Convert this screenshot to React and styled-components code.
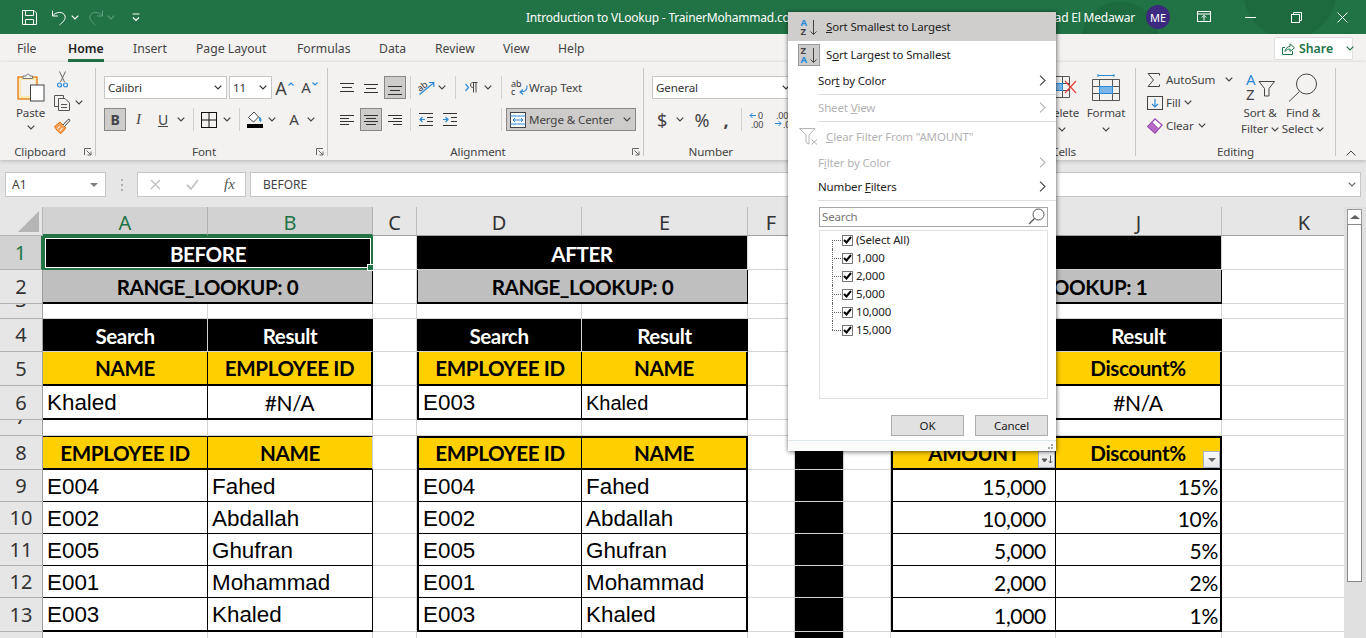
import React from 'react';
import styled, {createGlobalStyle} from 'styled-components';

const uiFont = `"Noto Sans", "Open Sans", sans-serif`;
const calibri = `Lato, "Noto Sans", sans-serif`;
const arial = `"Liberation Sans", Arial, sans-serif`;
const green = '#217346';
const inkGray = '#444444';
const blue = '#2b8ad8';

const GlobalStyle = createGlobalStyle`
  html, body {
    margin: 0;
    padding: 0;
    background: #e6e6e6;
    overflow: hidden;
  }
`;

/* ---------- icons ---------- */
const Svg = ({w, h, children, stroke = inkGray, fill = 'none'}) => (
    <svg width={w} height={h} viewBox={`0 0 ${w} ${h}`} fill={fill} stroke={stroke} strokeWidth="1" style={{display: 'block', flexShrink: 0}}>
        {children}
    </svg>
);

const Chevron = ({color = inkGray, w = 8}) => (
    <Svg w={w} h={5} stroke={color}><path d="M0.7 0.7L4 4L7.3 0.7" strokeWidth="1.2" /></Svg>
);

const SaveIcon = () => (
    <Svg w={17} h={17} stroke="#fff">
        <path d="M1.5 1.5H13L15.5 4V15.5H1.5Z" />
        <path d="M4.5 1.5V6.5H12.5V1.5M4.5 15.5V10.5H12.5V15.5" />
    </Svg>
);
const UndoIcon = ({color}) => (
    <Svg w={16} h={17} stroke={color}>
        <path d="M1.5 1.5V7H7" />
        <path d="M1.5 7C4.5 2.5 12.5 2 14 7C15 10.5 11.5 13.5 8.5 16" />
    </Svg>
);
const RedoIcon = ({color}) => (
    <Svg w={16} h={17} stroke={color}>
        <path d="M14.5 1.5V7H9" />
        <path d="M14.5 7C11.5 2.5 3.5 2 2 7C1 10.5 4.5 13.5 7.5 16" />
    </Svg>
);
const CustomizeIcon = () => (
    <Svg w={8} h={9} stroke="#fff">
        <path d="M0.5 1H7.5" />
        <path d="M1 4.5L4 7.5L7 4.5" strokeWidth="1.2" />
    </Svg>
);
const PresentIcon = () => (
    <Svg w={14} h={12} stroke="#fff">
        <rect x="0.5" y="0.5" width="13" height="10" />
        <path d="M0.5 3H13.5M7 9.5V4.5M4.8 6.5L7 4.3L9.2 6.5" />
    </Svg>
);
const MinIcon = () => <Svg w={11} h={3} stroke="#fff"><path d="M0 1.5H11" /></Svg>;
const RestoreIcon = () => (
    <Svg w={11} h={11} stroke="#fff">
        <rect x="0.5" y="2.5" width="8" height="8" />
        <path d="M2.5 2.5V0.5H10.5V8.5H8.5" />
    </Svg>
);
const CloseIcon = () => <Svg w={11} h={11} stroke="#fff"><path d="M0.5 0.5L10.5 10.5M10.5 0.5L0.5 10.5" /></Svg>;

const ShareIcon = () => (
    <Svg w={13} h={13} stroke={green}>
        <path d="M3 5.5H0.5V12.5H10.5V9" />
        <path d="M3 9.5C3.5 6 6 4.5 8 4.5V1.8L12.5 5.8L8 9.5V7C6 7 4.5 7.5 3 9.5Z" />
    </Svg>
);

const PasteIcon = () => (
    <Svg w={28} h={30}>
        <rect x="1" y="5" width="19" height="22" fill="#fbe9b0" stroke="#e07b1a" strokeWidth="1.3" />
        <rect x="4" y="8" width="14" height="16" fill="#f3f2f1" stroke="none" />
        <path d="M6 6.5V4H9C9 1.5 13 1.5 13 4H15.5V6.5Z" fill="#f3f2f1" stroke="#777" />
        <rect x="13.5" y="13" width="13.5" height="16" fill="#fff" stroke="#444" />
    </Svg>
);
const CutIcon = () => (
    <Svg w={11} h={17} stroke="#666">
        <path d="M2.5 0.5L7.5 11M8.5 0.5L3.5 11" />
        <circle cx="2.5" cy="14" r="2" stroke={blue} strokeWidth="1.2" />
        <circle cx="8.5" cy="14" r="2" stroke={blue} strokeWidth="1.2" />
    </Svg>
);
const CopyIcon = () => (
    <Svg w={16} h={16} stroke="#555">
        <path d="M9.5 3.5V0.5H0.5V11.5H4" />
        <path d="M4.5 3.5H11L15.5 8V15.5H4.5Z" fill="#f3f2f1" />
        <path d="M7 9.5H13M7 12.5H13" />
    </Svg>
);
const PainterIcon = () => (
    <Svg w={17} h={16}>
        <path d="M0.5 8.5L6 4L12 10L7 15.5C5 15 1.5 11 0.5 8.5Z" fill="#f4a259" stroke="#e0721a" />
        <path d="M3.5 10.5L6 8.5M6 13L8.5 10" stroke="#fff" />
        <path d="M9 7L14 1.5C15 0.5 16.5 2 15.5 3L10.5 8.5" fill="#f3f2f1" stroke="#444" />
    </Svg>
);
const Launcher = () => (
    <Svg w={8} h={8} stroke="#666">
        <path d="M0.5 7V0.5H7" />
        <path d="M2.5 2.5L7 7M7 3.5V7H3.5" />
    </Svg>
);
const Caret = ({up}) => (
    <Svg w={6} h={4} stroke={blue}><path d={up ? 'M0.5 3.5L3 1L5.5 3.5' : 'M0.5 0.5L3 3L5.5 0.5'} strokeWidth="1.2" /></Svg>
);
const BorderIcon = () => (
    <Svg w={16} h={16} stroke="#111">
        <rect x="0.5" y="0.5" width="15" height="15" />
        <path d="M8 0.5V15.5M0.5 8H15.5" />
    </Svg>
);
const FillIcon = () => (
    <Svg w={16} h={17}>
        <path d="M1.5 6.5L7 1L11.5 6L6.5 11Z" fill="#fff" stroke="#444" />
        <path d="M12.5 6C14 7.5 14.5 9.5 13.5 10.5C12.5 10 12.2 8 12.5 6Z" fill={blue} stroke={blue} />
        <rect x="0" y="13" width="16" height="4" fill="#000" stroke="none" />
    </Svg>
);
const Lines = ({rows}) => (
    <Svg w={14} h={14} stroke="#333">
        {rows.map(([a, b, y]) => <path key={y} d={`M${a} ${y}.5H${b}`} />)}
    </Svg>
);
const OrientIcon = () => (
    <Svg w={18} h={16} stroke={blue}>
        <path d="M1.5 14.5L15.5 3M11 2.5H15.8V7" strokeWidth="1.2" />
        <text x="0" y="10" fontSize="9" fontFamily={uiFont} fill="#333" stroke="none" transform="rotate(-38 4 8)">ab</text>
    </Svg>
);
const IndentIcon = ({reverse}) => (
    <Svg w={14} h={13} stroke="#333">
        <path d="M0 0.5H14M0 12.5H14M8 4.5H14M8 8.5H14" />
        <path d={reverse ? 'M6 6.5H1M3.5 4L1 6.5L3.5 9' : 'M0 6.5H5M2.5 4L5 6.5L2.5 9'} stroke={blue} strokeWidth="1.2" />
    </Svg>
);
const RtlIcon = () => (
    <Svg w={13} h={11} stroke={blue}>
        <path d="M0.5 2L3.5 5.5L0.5 9" strokeWidth="1.2" />
        <path d="M8.5 1V10.5M11 1V10.5M12.5 0.5H7.5C5 0.5 5 5.5 7.5 5.5H8.5" stroke="#444" />
    </Svg>
);
const WrapIcon = () => (
    <Svg w={17} h={17} stroke={blue}>
        <text x="0" y="7.5" fontSize="9" fontFamily={uiFont} fill="#333" stroke="none">ab</text>
        <text x="0" y="16" fontSize="9" fontFamily={uiFont} fill="#333" stroke="none">c</text>
        <path d="M16 6.5C16.5 11 14 13 10 13M12 10.5L9 13L12 15.5" strokeWidth="1.1" />
    </Svg>
);
const MergeIcon = () => (
    <Svg w={16} h={16} stroke="#444">
        <rect x="0.5" y="0.5" width="15" height="15" fill="#fff" />
        <path d="M0.5 4H15.5M0.5 12H15.5" stroke={blue} />
        <path d="M3 8H13M5 6L3 8L5 10M11 6L13 8L11 10" stroke={blue} />
    </Svg>
);
const DecMore = () => (
    <Svg w={16} h={17} stroke={blue}>
        <path d="M1 4.5H7M3.5 2L1 4.5L3.5 7" />
        <text x="9" y="8" fontSize="9" fontFamily={uiFont} fill="#444" stroke="none">0</text>
        <text x="2" y="16.5" fontSize="9" fontFamily={uiFont} fill="#444" stroke="none">.00</text>
    </Svg>
);
const DecLess = () => (
    <Svg w={16} h={17} stroke={blue}>
        <text x="2" y="8" fontSize="9" fontFamily={uiFont} fill="#444" stroke="none">.00</text>
        <path d="M1 12.5H7M4.5 10L7 12.5L4.5 15" />
        <text x="9" y="16.5" fontSize="9" fontFamily={uiFont} fill="#444" stroke="none">.0</text>
    </Svg>
);
const DeleteIcon = () => (
    <Svg w={30} h={22} stroke="#555">
        <path d="M0.5 0.5H22.5V21.5H0.5ZM0.5 7.5H22.5M0.5 14.5H22.5M8 0.5V21.5M15.5 0.5V21.5" />
        <rect x="0.5" y="7.5" width="15" height="7" fill="#7ab4e8" stroke={blue} />
        <path d="M18 5L29 17M29 5L18 17" stroke="#e8443a" strokeWidth="1.2" />
    </Svg>
);
const FormatIcon = () => (
    <Svg w={28} h={27} stroke="#555">
        <path d="M6 1.5H22M6 0V3M22 0V3" stroke={blue} />
        <path d="M0.5 5.5H27.5V26.5H0.5ZM0.5 12.5H27.5M0.5 19.5H27.5M7.5 5.5V26.5M20.5 5.5V26.5" />
        <rect x="7.5" y="12.5" width="13" height="7" fill="#7ab4e8" stroke={blue} />
    </Svg>
);
const SigmaIcon = () => <Svg w={13} h={14} stroke="#444"><path d="M12.5 2.5V0.5H1L6.5 7L1 13.5H12.5V11.5" /></Svg>;
const FillDownIcon = () => (
    <Svg w={16} h={14} stroke="#444">
        <rect x="0.5" y="0.5" width="15" height="13" />
        <path d="M8 3V10.5M5 8L8 11L11 8" stroke={blue} strokeWidth="1.2" />
    </Svg>
);
const EraserIcon = () => (
    <Svg w={16} h={16} stroke="#9b4fb0">
        <path d="M0.8 8.5L8 1L15 7L8 15Z" fill="#fff" strokeWidth="1.3" />
        <path d="M0.8 8.5L5 4.3L11.5 10.8L8 15Z" fill="#b66bc9" />
    </Svg>
);
const SortFilterIcon = () => (
    <Svg w={30} h={28} stroke="#444">
        <text x="1" y="12" fontSize="15" fontFamily={uiFont} fill={blue} stroke="none">A</text>
        <text x="1" y="27" fontSize="15" fontFamily={uiFont} fill="#444" stroke="none">Z</text>
        <path d="M14 8.5H29.5L24 15.5V23H19.5V15.5Z" />
    </Svg>
);
const FindIcon = () => (
    <Svg w={31} h={30} stroke="#444">
        <circle cx="18.5" cy="12" r="10" />
        <path d="M11.5 19.5L1 29.5" />
    </Svg>
);
const FunnelX = () => (
    <Svg w={19} h={17} stroke="#b5b5b5">
        <path d="M0.5 0.5H16L10 7V16L7 14.5V7Z" />
        <path d="M12.5 11.5L18 16.5M18 11.5L12.5 16.5" />
    </Svg>
);
const SortMenuIcon = ({first, second, boxed}) => (
    <SortBox $boxed={boxed}>
        <svg width="20" height="20" viewBox="0 0 20 20" fill="none" stroke="#444" style={{display: 'block'}}>
            <text x="1.5" y="8.5" fontSize="9.5" fontWeight="700" fontFamily={uiFont} fill={first === 'A' ? blue : '#444'} stroke="none">{first}</text>
            <text x="1.5" y="18" fontSize="9.5" fontWeight="700" fontFamily={uiFont} fill={second === 'A' ? blue : '#444'} stroke="none">{second}</text>
            <path d="M14.5 3V17.5M11.5 14.5L14.5 17.5L17.5 14.5" />
        </svg>
    </SortBox>
);
const MenuArrow = ({color}) => <Svg w={7} h={11} stroke={color}><path d="M1 0.7L6 5.5L1 10.3" strokeWidth="1.1" /></Svg>;
const SearchGlass = () => (
    <Svg w={17} h={17} stroke="#555">
        <circle cx="10.5" cy="6.5" r="5.5" />
        <path d="M6.5 10.5L1 16" strokeWidth="1.2" />
    </Svg>
);
const Tick = () => (
    <svg width="9" height="8" viewBox="0 0 9 8" fill="none" stroke="#000" strokeWidth="2" style={{display: 'block'}}>
        <path d="M1 4L3.5 6.5L8 1" />
    </svg>
);

/* ---------- title bar and tabs ---------- */
const Page = styled.div`
  position: relative;
  width: 1366px;
  height: 638px;
  overflow: hidden;
  background: #e6e6e6;
  font-family: ${uiFont};
  display: flex;
  flex-direction: column;
`;

const TitleBar = styled.div`
  height: 34px;
  flex-shrink: 0;
  background:
    radial-gradient(circle at 1120px 40px, #1c6a3e 0, #1c6a3e 38px, transparent 39px),
    radial-gradient(circle at 1290px -8px, #1c6a3e 0, #1c6a3e 46px, transparent 47px),
    ${green};
  color: #fff;
  display: flex;
  align-items: center;
  font-size: 12px;
  white-space: nowrap;
`;

const QuickBar = styled.div`
  width: 526px;
  flex-shrink: 0;
  display: flex;
  align-items: center;
`;

const QuickItem = styled.div`
  display: flex;
  align-items: center;
  justify-content: center;
  width: ${p => p.$w}px;
  margin-left: ${p => p.$ml || 0}px;
`;

const DocTitle = styled.div`
  width: 309px;
  flex-shrink: 0;
  letter-spacing: -0.2px;
`;

const UserName = styled.div`
  width: 300px;
  flex-shrink: 0;
  text-align: right;
  letter-spacing: -0.2px;
`;

const Avatar = styled.div`
  width: 24px;
  height: 24px;
  margin-left: 11px;
  border-radius: 50%;
  background: #3b2a7e;
  color: #fff;
  font-size: 11px;
  display: flex;
  align-items: center;
  justify-content: center;
`;

const WinBtn = styled.div`
  width: ${p => p.$w || 46}px;
  margin-left: ${p => p.$ml || 0}px;
  display: flex;
  align-items: center;
  justify-content: center;
`;

const TabRow = styled.div`
  height: 28px;
  flex-shrink: 0;
  background: #f3f2f1;
  display: flex;
  align-items: center;
  padding-left: 17px;
  position: relative;
`;

const TabSlot = styled.div`
  width: ${p => p.$w}px;
  flex-shrink: 0;
  display: flex;
`;

const TabLabel = styled.div`
  font-size: 12.2px;
  line-height: 29px;
  height: 28px;
  box-sizing: border-box;
  color: ${p => p.$active ? '#222' : inkGray};
  font-weight: ${p => p.$active ? 600 : 400};
  border-bottom: 3px solid ${p => p.$active ? green : 'transparent'};
`;

const ShareButton = styled.div`
  margin-left: auto;
  margin-right: 13px;
  width: 79px;
  height: 23px;
  box-sizing: border-box;
  background: #fff;
  border: 1px solid #e1dfdd;
  border-radius: 2px;
  color: ${green};
  font-size: 12.3px;
  font-weight: 600;
  display: flex;
  align-items: center;
  padding-left: 7px;
  gap: 4px;
`;

/* ---------- ribbon ---------- */
const Ribbon = styled.div`
  height: 98px;
  flex-shrink: 0;
  background: #f3f2f1;
  box-shadow: 0 1px 4px rgba(0, 0, 0, 0.22);
  display: flex;
  color: ${inkGray};
  font-size: 11.6px;
  letter-spacing: -0.12px;
  white-space: nowrap;
  position: relative;
  z-index: 1;
`;

const Group = styled.div`
  width: ${p => p.$w ? `${p.$w}px` : 'auto'};
  flex: ${p => p.$w ? '0 0 auto' : 1};
  display: flex;
  flex-direction: column;
  box-sizing: border-box;
  padding-top: 6px;
  padding-bottom: 4px;
`;

const GroupInner = styled.div`
  flex: 1;
  display: flex;
  flex-direction: column;
  border-right: ${p => p.$noLine ? 'none' : '1px solid #c8c6c4'};
`;

const GroupBody = styled.div`
  flex: 1;
  display: flex;
  padding-left: ${p => p.$pl || 0}px;
  padding-top: ${p => p.$pt ?? 8}px;
  justify-content: ${p => p.$end ? 'flex-end' : 'flex-start'};
  padding-right: ${p => p.$pr || 0}px;
`;

const Stack = styled.div`
  display: flex;
  flex-direction: column;
  gap: ${p => p.$gap ?? 9}px;
  width: ${p => p.$w ? `${p.$w}px` : 'auto'};
`;

const ToolRow = styled.div`
  display: flex;
  align-items: center;
  height: 23px;
`;

const Tool = styled.div`
  width: ${p => p.$w}px;
  margin-left: ${p => p.$ml || 0}px;
  height: 23px;
  flex-shrink: 0;
  box-sizing: border-box;
  display: flex;
  align-items: center;
  justify-content: ${p => p.$start ? 'flex-start' : 'center'};
  gap: ${p => p.$gap || 0}px;
  padding-left: ${p => p.$pl || 0}px;
  color: ${inkGray};
  background: ${p => p.$active ? '#cdccca' : 'transparent'};
  border: ${p => p.$active ? '1px solid #8a8886' : 'none'};
`;

const Letter = styled.span`
  font-family: ${p => p.$serif ? '"Liberation Serif", serif' : uiFont};
  font-weight: ${p => p.$bold ? 700 : 400};
  font-style: ${p => p.$italic ? 'italic' : 'normal'};
  text-decoration: ${p => p.$under ? 'underline' : 'none'};
  line-height: 1;
  font-size: ${p => p.$size || 14}px;
`;

const CaretWrap = styled.span`
  align-self: flex-start;
  margin-top: 6px;
  margin-left: 1px;
`;

const Spaced = styled.span`
  margin-left: ${p => p.$ml}px;
`;

const Divider = styled.div`
  width: 1px;
  height: 23px;
  flex-shrink: 0;
  margin-left: ${p => p.$ml || 0}px;
  background: #d2d0ce;
`;

const ComboBox = styled.div`
  width: ${p => p.$w}px;
  margin-left: ${p => p.$ml || 0}px;
  height: 23px;
  box-sizing: border-box;
  flex-shrink: 0;
  background: #fff;
  border: 1px solid #c8c6c4;
  color: #333;
  display: flex;
  align-items: center;
  justify-content: space-between;
  padding: 0 4px 0 3px;
`;

const GroupFoot = styled.div`
  display: grid;
  height: 16px;
  margin-bottom: -4px;
  align-items: center;
`;

const GroupLabel = styled.div`
  grid-area: 1 / 1;
  text-align: ${p => p.$right ? 'right' : 'center'};
  padding-right: ${p => p.$pr || 0}px;
  line-height: 16px;
`;

const LauncherSlot = styled.div`
  grid-area: 1 / 1;
  justify-self: end;
  margin-right: 3px;
`;

const PasteCol = styled.div`
  width: 47px;
  margin-top: 4px;
  display: flex;
  flex-direction: column;
  align-items: center;
`;

const PasteLabel = styled.span`
  line-height: 16px;
  margin: 3px 0 4px;
`;

const TallLabel = styled.div`
  line-height: 16px;
  text-align: center;
  display: flex;
  align-items: center;
  gap: 3px;
  min-height: 16px;
`;

const TallBtn = styled.div`
  width: ${p => p.$w}px;
  display: flex;
  flex-direction: column;
  align-items: center;
`;

const TallIcon = styled.div`
  height: ${p => p.$h || 36}px;
  display: flex;
  align-items: center;
`;

const SmallCmd = styled.div`
  height: 23px;
  display: flex;
  align-items: center;
`;

const CmdIcon = styled.div`
  width: 19px;
  display: flex;
  justify-content: flex-start;
`;

const CollapseArrow = styled.div`
  width: 30px;
  flex-shrink: 0;
  display: flex;
  justify-content: center;
  align-items: flex-end;
  padding-bottom: 4px;
  box-sizing: border-box;
`;

const RibbonGroup = ({w, label, launcher, noLine, children, pr}) => (
    <Group $w={w}>
        <GroupInner $noLine={noLine}>
            {children}
            <GroupFoot>
                <GroupLabel $pr={pr ?? (launcher ? 15 : 0)} $right={pr !== undefined}>{label}</GroupLabel>
                {launcher && <LauncherSlot><Launcher /></LauncherSlot>}
            </GroupFoot>
        </GroupInner>
    </Group>
);

const TheRibbon = () => (
    <Ribbon>
        <RibbonGroup w={96} label="Clipboard" launcher>
            <GroupBody $pl={7} $pt={0}>
                <PasteCol>
                    <PasteIcon />
                    <PasteLabel>Paste</PasteLabel>
                    <Chevron />
                </PasteCol>
                <Stack $gap={0}>
                    <ToolRow><Tool $w={16}><CutIcon /></Tool></ToolRow>
                    <ToolRow><Tool $w={16}><CopyIcon /></Tool><Tool $w={18}><Chevron /></Tool></ToolRow>
                    <ToolRow><Tool $w={17}><PainterIcon /></Tool></ToolRow>
                </Stack>
            </GroupBody>
        </RibbonGroup>
        <RibbonGroup w={232} label="Font" launcher>
            <GroupBody $pl={8}>
                <Stack>
                    <ToolRow>
                        <ComboBox $w={123}><span>Calibri</span><Chevron color="#333" /></ComboBox>
                        <ComboBox $w={43} $ml={2}><span>11</span><Chevron color="#333" /></ComboBox>
                        <Tool $w={25}><Letter $size={18}>A</Letter><CaretWrap><Caret up /></CaretWrap></Tool>
                        <Tool $w={25}><Letter $size={15}>A</Letter><CaretWrap><Caret /></CaretWrap></Tool>
                    </ToolRow>
                    <ToolRow>
                        <Tool $w={22} $active><Letter $bold>B</Letter></Tool>
                        <Tool $w={25}><Letter $serif $italic $size={15}>I</Letter></Tool>
                        <Tool $w={24}><Letter $under $size={14}>U</Letter></Tool>
                        <Tool $w={11}><Chevron /></Tool>
                        <Divider $ml={7} />
                        <Tool $w={16} $ml={7}><BorderIcon /></Tool>
                        <Tool $w={19}><Chevron /></Tool>
                        <Divider $ml={3} />
                        <Tool $w={16} $ml={7}><FillIcon /></Tool>
                        <Tool $w={18}><Chevron /></Tool>
                        <Tool $w={26}><Letter $size={15}>A</Letter></Tool>
                        <Tool $w={8}><Chevron /></Tool>
                    </ToolRow>
                </Stack>
            </GroupBody>
        </RibbonGroup>
        <RibbonGroup w={316} label="Alignment" launcher>
            <GroupBody $pl={12}>
                <Stack>
                    <ToolRow>
                        <Tool $w={14}><Lines rows={[[0, 14, 2], [2, 12, 6], [0, 14, 10]]} /></Tool>
                        <Tool $w={14} $ml={10}><Lines rows={[[0, 14, 3], [2, 12, 7], [0, 14, 11]]} /></Tool>
                        <Tool $w={22} $ml={6} $active><Lines rows={[[0, 14, 5], [2, 12, 9], [0, 14, 13]]} /></Tool>
                        <Divider $ml={4} />
                        <Tool $w={18} $ml={7}><OrientIcon /></Tool>
                        <Tool $w={8} $ml={2}><Chevron /></Tool>
                        <Divider $ml={9} />
                        <Tool $w={13} $ml={9}><RtlIcon /></Tool>
                        <Tool $w={8} $ml={6}><Chevron /></Tool>
                        <Divider $ml={9} />
                        <Tool $w={76} $ml={9} $start $gap={1}><WrapIcon /><span>Wrap Text</span></Tool>
                    </ToolRow>
                    <ToolRow>
                        <Tool $w={14}><Lines rows={[[0, 14, 2], [0, 9, 5], [0, 14, 8], [0, 9, 11]]} /></Tool>
                        <Tool $w={22} $ml={6} $active><Lines rows={[[0, 14, 2], [2, 12, 5], [0, 14, 8], [2, 12, 11]]} /></Tool>
                        <Tool $w={14} $ml={6}><Lines rows={[[0, 14, 2], [5, 14, 5], [0, 14, 8], [5, 14, 11]]} /></Tool>
                        <Divider $ml={8} />
                        <Tool $w={14} $ml={8}><IndentIcon reverse /></Tool>
                        <Tool $w={14} $ml={10}><IndentIcon /></Tool>
                        <Divider $ml={44} />
                        <Tool $w={130} $ml={4} $active $start $pl={3} $gap={3}>
                            <MergeIcon /><span>Merge &amp; Center</span><Spaced $ml={6}><Chevron /></Spaced>
                        </Tool>
                    </ToolRow>
                </Stack>
            </GroupBody>
        </RibbonGroup>
        <RibbonGroup w={160} label="Number" pr={70}>
            <GroupBody $pl={8}>
                <Stack>
                    <ToolRow><ComboBox $w={143}><span>General</span><Chevron color="#333" /></ComboBox></ToolRow>
                    <ToolRow>
                        <Tool $w={12} $ml={4}><Letter $size={18}>$</Letter></Tool>
                        <Tool $w={8} $ml={8}><Chevron /></Tool>
                        <Tool $w={26} $ml={5}><Letter $size={18}>%</Letter></Tool>
                        <Tool $w={14} $ml={4}><Letter $size={18} $bold>,</Letter></Tool>
                        <Divider $ml={8} />
                        <Tool $w={16} $ml={7}><DecMore /></Tool>
                        <Tool $w={16} $ml={9}><DecLess /></Tool>
                    </ToolRow>
                </Stack>
            </GroupBody>
        </RibbonGroup>
        <RibbonGroup label="Cells" pr={59}>
            <GroupBody $end $pr={7} $pt={1}>
                <TallBtn $w={44}>
                    <TallIcon><DeleteIcon /></TallIcon>
                    <TallLabel>Delete</TallLabel>
                    <TallLabel><Chevron /></TallLabel>
                </TallBtn>
                <TallBtn $w={44}>
                    <TallIcon><FormatIcon /></TallIcon>
                    <TallLabel>Format</TallLabel>
                    <TallLabel><Chevron /></TallLabel>
                </TallBtn>
            </GroupBody>
        </RibbonGroup>
        <RibbonGroup w={200} label="Editing">
            <GroupBody $pl={11} $pt={0}>
                <Stack $gap={0} $w={95}>
                    <SmallCmd><CmdIcon><SigmaIcon /></CmdIcon>AutoSum<Spaced $ml={10}><Chevron /></Spaced></SmallCmd>
                    <SmallCmd><CmdIcon><FillDownIcon /></CmdIcon>Fill<Spaced $ml={3}><Chevron /></Spaced></SmallCmd>
                    <SmallCmd><CmdIcon><EraserIcon /></CmdIcon>Clear<Spaced $ml={4}><Chevron /></Spaced></SmallCmd>
                </Stack>
                <TallBtn $w={36}>
                    <TallIcon $h={37}><SortFilterIcon /></TallIcon>
                    <TallLabel>Sort &amp;</TallLabel>
                    <TallLabel>Filter<Chevron /></TallLabel>
                </TallBtn>
                <TallBtn $w={50}>
                    <TallIcon $h={37}><FindIcon /></TallIcon>
                    <TallLabel>Find &amp;</TallLabel>
                    <TallLabel>Select<Chevron /></TallLabel>
                </TallBtn>
            </GroupBody>
        </RibbonGroup>
        <CollapseArrow>
            <Svg w={10} h={6} stroke="#444"><path d="M0.5 5.5L5 1L9.5 5.5" /></Svg>
        </CollapseArrow>
    </Ribbon>
);

/* ---------- formula bar ---------- */
const FormulaBar = styled.div`
  height: 47px;
  flex-shrink: 0;
  box-sizing: border-box;
  padding: 12px 5px 0 5px;
  display: flex;
  align-items: flex-start;
  background: #e6e6e6;
`;

const NameBox = styled.div`
  width: 101px;
  height: 25px;
  box-sizing: border-box;
  background: #fff;
  border: 1px solid #c6c6c6;
  color: #444;
  font-size: 12px;
  display: flex;
  align-items: center;
  justify-content: space-between;
  padding: 0 7px 0 6px;
`;

const DropTriangle = styled.span`
  width: 0;
  height: 0;
  border-left: 4px solid transparent;
  border-right: 4px solid transparent;
  border-top: 4px solid ${p => p.$color || '#808080'};
`;

const GripDots = styled.div`
  width: 31px;
  height: 25px;
  display: flex;
  flex-direction: column;
  align-items: center;
  justify-content: center;
  gap: 3px;
`;

const GripDot = styled.span`
  width: 2px;
  height: 2px;
  background: #b0b0b0;
`;

const FxBox = styled.div`
  width: 109px;
  height: 25px;
  box-sizing: border-box;
  background: #fff;
  border: 1px solid #c6c6c6;
  display: flex;
  align-items: center;
  padding-left: 12px;
  gap: 25px;
`;

const FxText = styled.span`
  font-family: "Liberation Serif", serif;
  font-style: italic;
  font-size: 15px;
  color: #555;
`;

const FormulaInput = styled.div`
  flex: 1;
  height: 25px;
  margin-left: 4px;
  box-sizing: border-box;
  background: #fff;
  border: 1px solid #c6c6c6;
  color: #444;
  font-size: 12px;
  display: flex;
  align-items: center;
  justify-content: space-between;
  padding: 0 4px 0 12px;
`;

/* ---------- sheet ---------- */
const COL_NAMES = ['A', 'B', 'C', 'D', 'E', 'F', 'G', 'H', 'I', 'J', 'K'];
const COL_WIDTHS = [165, 165, 44, 165, 166, 47, 49, 47, 165, 166, 165];
const ROW_HEIGHTS = [34, 34, 15, 33, 34, 34, 16, 34, 32, 32, 32, 32, 34, 34];

const SheetRow = styled.div`
  flex: 1;
  display: flex;
  min-height: 0;
`;

const Grid = styled.div`
  display: grid;
  width: 1344px;
  flex-shrink: 0;
  grid-template-columns: 43px ${COL_WIDTHS.map(w => `${w}px`).join(' ')};
  grid-template-rows: 29px ${ROW_HEIGHTS.map(h => `${h}px`).join(' ')};
  overflow: hidden;
`;

const Corner = styled.div`
  background: #e6e6e6;
  border-right: 1px solid #b4b4b4;
  border-bottom: 1px solid #b4b4b4;
  box-sizing: border-box;
  display: flex;
  align-items: flex-end;
  justify-content: flex-end;
  padding: 0 3px 3px 0;
`;

const CornerMark = styled.span`
  width: 0;
  height: 0;
  border-left: 21px solid transparent;
  border-bottom: 21px solid #b5b5b5;
`;

const ColHead = styled.div`
  box-sizing: border-box;
  background: ${p => p.$on ? '#d2d2d2' : '#e6e6e6'};
  color: ${p => p.$on ? green : '#333'};
  border-right: 1px solid ${p => p.$on ? '#b0b0b0' : '#bdbdbd'};
  border-bottom: ${p => p.$on ? `2px solid ${green}` : '1px solid #9f9f9f'};
  font-size: 20px;
  display: flex;
  align-items: center;
  justify-content: center;
  padding-top: 3px;
`;

const RowHead = styled.div`
  box-sizing: border-box;
  background: ${p => p.$on ? '#d2d2d2' : '#e6e6e6'};
  color: ${p => p.$on ? green : '#333'};
  border-right: ${p => p.$on ? `2px solid ${green}` : '1px solid #9f9f9f'};
  border-bottom: 1px solid #b0b0b0;
  font-size: 20px;
  line-height: 1;
  display: flex;
  align-items: ${p => p.$short ? 'flex-end' : 'center'};
  padding-bottom: ${p => p.$short ? 8 : 0}px;
  justify-content: center;
  overflow: hidden;
`;

const FILLS = {title: '#000', grey: '#bfbfbf', gold: '#ffd000', blank: '#fff', black: '#000'};
const gridLine = '#d4d4d4';

const cellPadding = p => {
    if (p.$align === 'left') return '2px 0 0 4px';
    if (p.$align === 'right') return `2px ${p.$rightPad ?? 2}px 0 0`;
    return p.$kind === 'title' || p.$kind === 'grey' ? '2px 0 0 0' : '0';
};

const Cell = styled.div`
  position: relative;
  box-sizing: border-box;
  min-width: 0;
  display: flex;
  align-items: center;
  white-space: nowrap;
  grid-column: span ${p => p.$span || 1};
  justify-content: ${p => p.$align === 'left' ? 'flex-start' : p.$align === 'right' ? 'flex-end' : 'center'};
  padding: ${cellPadding};
  background: ${p => FILLS[p.$kind] || '#fff'};
  color: ${p => p.$kind === 'title' ? '#fff' : '#000'};
  font-family: ${p => p.$plain ? arial : calibri};
  font-size: ${p => p.$small ? 20 : p.$plain ? 22.4 : p.$bold ? 20.6 : 21}px;
  font-weight: ${p => p.$bold ? 700 : 400};
  letter-spacing: ${p => p.$plain ? 0 : p.$bold ? -0.4 : -0.3}px;
  border-right: ${p => p.$br || 1}px solid ${p => p.$br ? '#000' : gridLine};
  border-bottom: ${p => p.$bb || 1}px solid ${p => p.$bb ? '#000' : gridLine};
  border-left: ${p => p.$bl ? `${p.$bl}px solid #000` : 'none'};
  border-top: ${p => p.$bt ? `${p.$bt}px solid #000` : 'none'};
  ${p => p.$selected && `
    border: 2px solid ${green};
    box-shadow: inset 0 0 0 1px #fff;
    z-index: 1;
  `}
`;

const FillHandle = styled.span`
  position: absolute;
  right: -3px;
  bottom: -3px;
  width: 5px;
  height: 5px;
  background: ${green};
  border: 1px solid #fff;
  box-sizing: content-box;
`;

const FilterButton = styled.span`
  position: absolute;
  right: 0;
  bottom: 0;
  width: 17px;
  height: 17px;
  box-sizing: border-box;
  background: linear-gradient(#fafafa, #e6e6e6);
  border: 1px solid #a9b2c0;
  display: flex;
  align-items: center;
  justify-content: center;
`;

const SortedGlyph = () => (
    <Svg w={12} h={9} stroke="#555">
        <path d="M1 4H6L3.5 7Z" fill="#555" />
        <path d="M9.5 0.5V8M7.8 6.2L9.5 8L11.2 6.2" />
    </Svg>
);

const Scrollbar = styled.div`
  flex: 1;
  background: #e0e0e0;
  box-sizing: border-box;
  padding: 2px 4px 0 3px;
`;

const ScrollButton = styled.div`
  height: 15px;
  box-sizing: border-box;
  background: #fff;
  border: 1px solid #999;
  border-bottom: none;
  display: flex;
  align-items: center;
  justify-content: center;
`;

const ScrollThumb = styled.div`
  height: 358px;
  box-sizing: border-box;
  background: #fff;
  border: 1px solid #888;
`;

const ScrollUp = styled.span`
  width: 0;
  height: 0;
  border-left: 5px solid transparent;
  border-right: 5px solid transparent;
  border-bottom: 4px solid #606060;
`;

const BLOCKS = [
    {
        col: 0, heavy: false, title: 'BEFORE', lookup: 'RANGE_LOOKUP: 0', heads: ['NAME', 'EMPLOYEE ID'], value: ['Khaled', '#N/A'],
        listHeads: ['EMPLOYEE ID', 'NAME'], plain: [true, false], bodyPlain: [true, true],
        body: [['E004', 'Fahed'], ['E002', 'Abdallah'], ['E005', 'Ghufran'], ['E001', 'Mohammad'], ['E003', 'Khaled']]
    },
    {
        col: 3, heavy: true, title: 'AFTER', lookup: 'RANGE_LOOKUP: 0', heads: ['EMPLOYEE ID', 'NAME'], value: ['E003', 'Khaled'],
        listHeads: ['EMPLOYEE ID', 'NAME'], plain: [true, true], smallValue: true, bodyPlain: [true, true],
        body: [['E004', 'Fahed'], ['E002', 'Abdallah'], ['E005', 'Ghufran'], ['E001', 'Mohammad'], ['E003', 'Khaled']]
    },
    {
        col: 8, heavy: true, title: '', lookup: 'RANGE_LOOKUP: 1', heads: ['', 'Discount%'], value: ['', '#N/A'],
        listHeads: ['AMOUNT', 'Discount%'], plain: [false, false], bodyPlain: [false, false], numeric: true,
        body: [['15,000', '15%'], ['10,000', '10%'], ['5,000', '5%'], ['2,000', '2%'], ['1,000', '1%']]
    }
];

const buildCells = () => {
    const map = {};
    BLOCKS.forEach(b => {
        const outer = b.heavy ? 2 : 1;
        const leftEdge = b.col === 0 ? 0 : outer;
        map[`1:${b.col}`] = {text: b.title, span: 2, $kind: 'title', $bold: true, $selected: b.col === 0};
        map[`1:${b.col + 1}`] = {skip: true};
        map[`2:${b.col}`] = {text: b.lookup, span: 2, $kind: 'grey', $bold: true, $bb: 2, $br: 1, $bl: leftEdge ? 1 : 0};
        map[`2:${b.col + 1}`] = {skip: true};
        [0, 1].forEach(side => {
            const c = b.col + side;
            const edges = side === 0 ? {$bl: leftEdge, $br: 1} : {$br: outer};
            const lookupEdges = side === 0 ? {$bl: leftEdge, $br: 1} : {$br: 2};
            const headEdges = side === 0 ? {$bl: leftEdge, $br: 1} : {$br: b.heavy ? 2 : 0};
            map[`4:${c}`] = {text: ['Search', 'Result'][side], $kind: 'title', $bold: true, $br: side ? 1 : 0};
            map[`5:${c}`] = {text: b.heads[side], $kind: 'gold', $bold: true, ...lookupEdges, $bb: 2};
            map[`6:${c}`] = {
                text: b.value[side], $plain: b.plain[side], $align: b.plain[side] ? 'left' : 'center',
                $small: b.smallValue && side === 1, ...lookupEdges, $bb: 2
            };
            map[`8:${c}`] = {text: b.listHeads[side], $kind: 'gold', $bold: true, ...headEdges, $bt: outer, $bb: 2, filter: b.numeric ? side + 1 : 0};
            b.body.forEach((row, i) => {
                map[`${9 + i}:${c}`] = {
                    text: row[side], $plain: b.bodyPlain[side], $align: b.numeric ? 'right' : 'left',
                    $rightPad: b.numeric && side === 0 ? 9 : 2,
                    ...edges, $bb: i === 4 ? 2 : 1
                };
            });
        });
    });
    for (let r = 8; r <= 14; r++) map[`${r}:6`] = {$kind: 'black'};
    return map;
};

const Sheet = () => {
    const cells = buildCells();
    return (
        <SheetRow>
            <Grid>
                <Corner><CornerMark /></Corner>
                {COL_NAMES.map((name, i) => <ColHead key={name} $on={i < 2}>{name}</ColHead>)}
                {ROW_HEIGHTS.flatMap((height, r) => {
                    const row = r + 1;
                    const out = [<RowHead key={`h${row}`} $on={row === 1} $short={height < 20}>{row}</RowHead>];
                    COL_NAMES.forEach((_, c) => {
                        const {skip, text, span, filter, ...props} = cells[`${row}:${c}`] || {};
                        if (skip) return;
                        out.push(
                            <Cell key={`${row}:${c}`} $span={span} {...props}>
                                {text}
                                {props.$selected && <FillHandle />}
                                {filter === 1 && <FilterButton><SortedGlyph /></FilterButton>}
                                {filter === 2 && <FilterButton><DropTriangle $color="#666" /></FilterButton>}
                            </Cell>
                        );
                    });
                    return out;
                })}
            </Grid>
            <Scrollbar>
                <ScrollButton><ScrollUp /></ScrollButton>
                <ScrollThumb />
            </Scrollbar>
        </SheetRow>
    );
};

/* ---------- filter popup ---------- */
const Popup = styled.div`
  position: absolute;
  left: 788px;
  top: 12px;
  width: 268px;
  height: 439px;
  z-index: 5;
  box-sizing: border-box;
  background: #fff;
  box-shadow: 0 0 4px rgba(0, 0, 0, 0.45), 1px 2px 5px rgba(0, 0, 0, 0.25);
  display: flex;
  flex-direction: column;
  font-size: 11.5px;
  letter-spacing: -0.15px;
  color: #222;
`;

const MenuRow = styled.div`
  height: ${p => p.$h}px;
  flex-shrink: 0;
  display: flex;
  align-items: center;
  box-sizing: border-box;
  padding-left: ${p => p.$icon ? 11 : 30}px;
  padding-right: 10px;
  padding-bottom: ${p => p.$pb || 0}px;
  background: ${p => p.$hover ? '#cfcecc' : 'transparent'};
  color: ${p => p.$off ? '#b3b3b3' : '#222'};
  white-space: nowrap;
`;

const MenuLabel = styled.span`
  flex: 1;
  margin-left: ${p => p.$indent || 0}px;
`;

const SortBox = styled.span`
  width: 20px;
  height: 20px;
  display: block;
  flex-shrink: 0;
  box-sizing: border-box;
  background: ${p => p.$boxed ? '#cdccca' : 'transparent'};
  outline: ${p => p.$boxed ? '1px solid #9a9a9a' : 'none'};
`;

const MenuLine = styled.div`
  height: 1px;
  flex-shrink: 0;
  margin-left: 30px;
  background: #e1dfdd;
`;

const SearchBox = styled.div`
  margin: 6px 8px 0 31px;
  height: 20px;
  flex-shrink: 0;
  box-sizing: border-box;
  border: 1px solid #a6a6a6;
  display: flex;
  align-items: center;
  justify-content: space-between;
  padding: 0 2px 2px 2px;
  color: #777;
`;

const TreeList = styled.div`
  margin: 3px 8px 0 31px;
  height: 169px;
  flex-shrink: 0;
  box-sizing: border-box;
  border: 1px solid #e1e1e1;
  padding: 0 0 0 12px;
  display: flex;
  flex-direction: column;
`;

const TreeItem = styled.div`
  height: 18px;
  display: flex;
  align-items: center;
  gap: 3px;
  color: #222;
`;

const Connector = styled.span`
  position: relative;
  width: 7px;
  height: 18px;
  flex-shrink: 0;
  &::before {
    content: '';
    position: absolute;
    left: 0;
    top: ${p => p.$first ? '9px' : '0'};
    height: ${p => p.$first || p.$last ? '9px' : '18px'};
    border-left: 1px dotted #666;
  }
  &::after {
    content: '';
    position: absolute;
    left: 0;
    top: 9px;
    width: 9px;
    border-top: 1px dotted #666;
  }
`;

const CheckBox = styled.span`
  width: 11px;
  height: 11px;
  flex-shrink: 0;
  box-sizing: border-box;
  border: 1px solid #777;
  background: #fff;
  display: flex;
  align-items: center;
  justify-content: center;
`;

const TreeText = styled.span`
  padding-bottom: 1px;
`;

const ButtonRow = styled.div`
  display: flex;
  justify-content: flex-end;
  gap: 11px;
  margin: 16px 8px 0 0;
`;

const DialogButton = styled.div`
  width: 73px;
  height: 21px;
  box-sizing: border-box;
  background: #e1e1e1;
  border: 1px solid #adadad;
  display: flex;
  align-items: center;
  justify-content: center;
  color: #222;
`;

const ResizeBar = styled.div`
  margin-top: auto;
  height: 11px;
  box-sizing: border-box;
  border-top: 1px solid #dde6ea;
  background: #fbfbfb;
  display: grid;
  grid-template-columns: repeat(2, 2px);
  grid-auto-rows: 2px;
  gap: 1px;
  justify-content: end;
  align-content: end;
  padding: 0 3px 2px 0;
`;

const GripSpot = styled.span`
  background: ${p => p.$on ? '#aaa' : 'transparent'};
`;

const TREE = ['(Select All)', '1,000', '2,000', '5,000', '10,000', '15,000'];
const TABS = [
    ['File', 51], ['Home', 65], ['Insert', 63], ['Page Layout', 101], ['Formulas', 82],
    ['Data', 56], ['Review', 68], ['View', 55], ['Help', 40]
];

const FilterPopup = () => (
    <Popup>
        <MenuRow $h={29} $hover $icon><SortMenuIcon first="A" second="Z" /><MenuLabel $indent={7}><u>S</u>ort Smallest to Largest</MenuLabel></MenuRow>
        <MenuRow $h={28} $icon $pb={1}><SortMenuIcon first="Z" second="A" boxed /><MenuLabel $indent={7}>S<u>o</u>rt Largest to Smallest</MenuLabel></MenuRow>
        <MenuRow $h={25} $pb={2}><MenuLabel>Sor<u>t</u> by Color</MenuLabel><MenuArrow color="#444" /></MenuRow>
        <MenuLine />
        <MenuRow $h={26} $off $pb={2}><MenuLabel>Sheet <u>V</u>iew</MenuLabel><MenuArrow color="#b3b3b3" /></MenuRow>
        <MenuLine />
        <MenuRow $h={28} $off $icon><FunnelX /><MenuLabel $indent={8}><u>C</u>lear Filter From "AMOUNT"</MenuLabel></MenuRow>
        <MenuRow $h={26} $off $pb={2}><MenuLabel>F<u>i</u>lter by Color</MenuLabel><MenuArrow color="#b3b3b3" /></MenuRow>
        <MenuRow $h={24} $pb={4}><MenuLabel>Number <u>F</u>ilters</MenuLabel><MenuArrow color="#444" /></MenuRow>
        <MenuLine />
        <SearchBox><span>Search</span><SearchGlass /></SearchBox>
        <TreeList>
            {TREE.map((label, i) => (
                <TreeItem key={label}>
                    <Connector $first={i === 0} $last={i === TREE.length - 1} />
                    <CheckBox><Tick /></CheckBox>
                    <TreeText>{label}</TreeText>
                </TreeItem>
            ))}
        </TreeList>
        <ButtonRow>
            <DialogButton>OK</DialogButton>
            <DialogButton>Cancel</DialogButton>
        </ButtonRow>
        <ResizeBar>
            <GripSpot /><GripSpot $on /><GripSpot $on /><GripSpot $on />
        </ResizeBar>
    </Popup>
);

export default function App() {
    return (
        <Page>
            <GlobalStyle />
            <TitleBar>
                <QuickBar>
                    <QuickItem $w={17} $ml={21}><SaveIcon /></QuickItem>
                    <QuickItem $w={16} $ml={13}><UndoIcon color="#fff" /></QuickItem>
                    <QuickItem $w={8} $ml={4}><Chevron color="#fff" /></QuickItem>
                    <QuickItem $w={16} $ml={9}><RedoIcon color="#5f9d7c" /></QuickItem>
                    <QuickItem $w={8} $ml={3}><Chevron color="#5f9d7c" /></QuickItem>
                    <QuickItem $w={8} $ml={17}><CustomizeIcon /></QuickItem>
                </QuickBar>
                <DocTitle>Introduction to VLookup - TrainerMohammad.com</DocTitle>
                <UserName>Mohammad El Medawar</UserName>
                <Avatar>ME</Avatar>
                <WinBtn $w={14} $ml={27}><PresentIcon /></WinBtn>
                <WinBtn $w={11} $ml={34}><MinIcon /></WinBtn>
                <WinBtn $w={11} $ml={35}><RestoreIcon /></WinBtn>
                <WinBtn $w={11} $ml={35}><CloseIcon /></WinBtn>
            </TitleBar>
            <TabRow>
                {TABS.map(([name, w]) => (
                    <TabSlot key={name} $w={w}><TabLabel $active={name === 'Home'}>{name}</TabLabel></TabSlot>
                ))}
                <ShareButton><ShareIcon />Share<Spaced $ml={9}><Chevron color={green} /></Spaced></ShareButton>
            </TabRow>
            <TheRibbon />
            <FormulaBar>
                <NameBox><span>A1</span><DropTriangle /></NameBox>
                <GripDots><GripDot /><GripDot /><GripDot /></GripDots>
                <FxBox>
                    <Svg w={11} h={11} stroke="#c4c4c4"><path d="M1 1L10 10M10 1L1 10" strokeWidth="1.5" /></Svg>
                    <Svg w={13} h={11} stroke="#c4c4c4"><path d="M1 6L5 10L12 1" strokeWidth="1.8" /></Svg>
                    <FxText>fx</FxText>
                </FxBox>
                <FormulaInput><span>BEFORE</span><Chevron color="#666" /></FormulaInput>
            </FormulaBar>
            <Sheet />
            <FilterPopup />
        </Page>
    );
}
